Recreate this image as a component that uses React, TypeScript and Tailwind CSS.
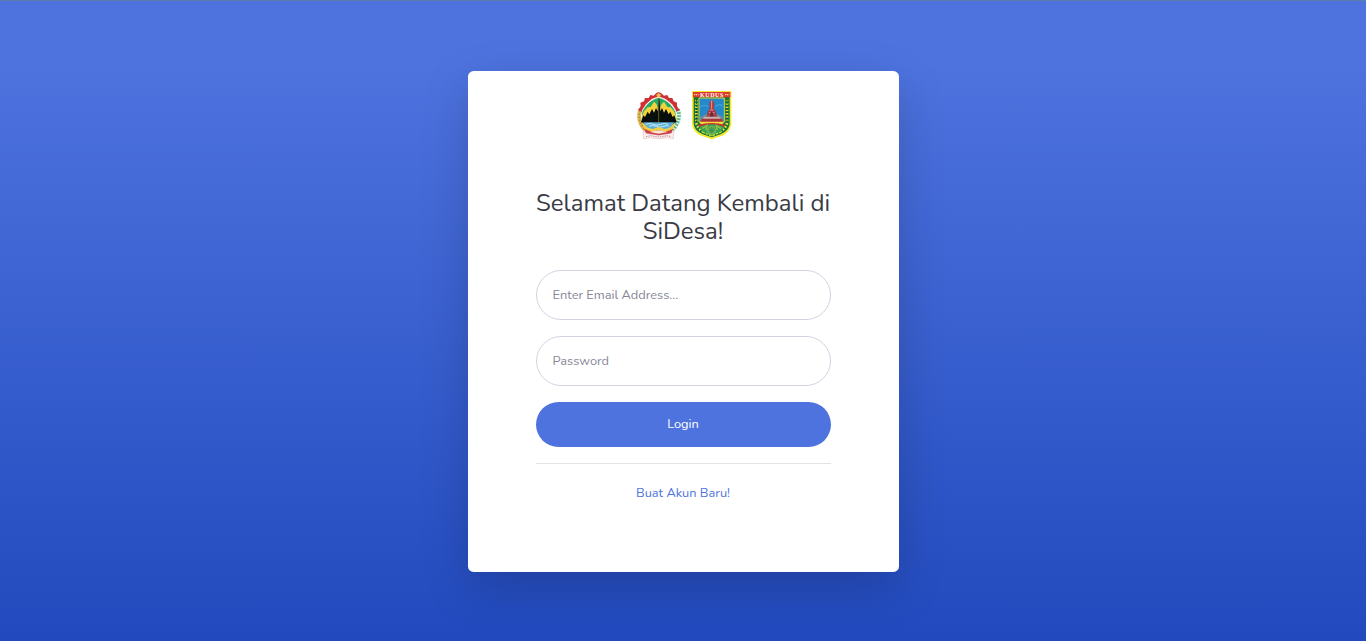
import React from "react";

function ProvinceCrest() {
  return (
    <svg width="54" height="58" viewBox="0 0 162 174" role="img" aria-label="Jawa Tengah">
      <path d="M33 136 L46 142 Q80 153 114 142 L126 136 L124 158 L106 155 Q81 162 54 155 L35 159Z" fill="#f9eeee" stroke="#e2c6c6" strokeWidth="2" />
      <path d="M42 152 L56 149 Q81 156 104 149 L118 152" fill="none" stroke="#c08a8a" strokeWidth="3" strokeDasharray="4 3" />
      <path d="M25 72 C17 93 23 116 40 132" fill="none" stroke="#dfb850" strokeWidth="12" />
      <path d="M24 74 C17 94 25 117 39 131" fill="none" stroke="#a98138" strokeWidth="4" strokeDasharray="4 5" />
      <path d="M137 70 C145 92 139 114 122 131" fill="none" stroke="#dff3e8" strokeWidth="14" />
      <path d="M138 70 C145 92 139 114 122 131" fill="none" stroke="#58b482" strokeWidth="11" strokeDasharray="5 4" />
      <path d="M18 72 L26 61 L25 50 L36 46 L39 36 L50 36 L55 27 L65 29 L73 21 L80 18 L88 22 L96 29 L106 27 L111 36 L121 36 L125 46 L135 50 L135 61 L143 72 L132 77 L119 58 L100 42 L80 34 L60 42 L43 57 L30 77Z" fill="#cf3038" />
      <path d="M31 75 L43 56 L60 41 L80 33 L100 41 L119 56 L131 75" fill="none" stroke="#fff0ea" strokeWidth="4" />
      <path d="M80 36 C60 39 40 57 31 78 L29 98 L42 124 L80 134 L119 124 L133 98 L130 78 C121 57 100 39 80 36Z" fill="#25ad68" />
      <path d="M29 92 L36 76 L47 64 L56 63 L66 47 L73 54 L78 66 L84 66 L89 54 L96 47 L106 63 L116 64 L126 76 L133 92 V102 H29Z" fill="#f3d23c" />
      <path d="M27 108 L34 88 L39 93 L47 77 L52 85 L60 69 L66 80 L72 66 L77 76 L79 38 H82 L85 76 L90 66 L96 80 L102 69 L110 85 L115 77 L122 93 L127 88 L134 108 L123 115 H38Z" fill="#090f0c" />
      <path d="M80 37 V110" stroke="#8f8330" strokeWidth="2" />
      <path d="M34 109 H127 Q119 125 103 132 H57 Q41 125 34 109Z" fill="#5cadd8" />
      <path d="M42 115 Q53 110 64 115 T86 115 T108 115 M51 121 Q62 116 73 121 T96 121 T111 121" fill="none" stroke="#c9eaf5" strokeWidth="3" />
      <path d="M31 108 L39 117 Q46 128 62 129 L80 123 L98 129 Q114 128 121 117 L130 108 L124 129 Q106 142 80 138 Q54 142 37 129Z" fill="#f1ce43" />
      <path d="M36 128 L61 138 L80 132 L99 138 L124 128 L118 142 L80 148 L42 142Z" fill="#ce414a" />
      <path d="M54 138 L80 133 L106 138 L80 143Z" fill="#fae8d6" />
      <path d="M80 19 L83 25 L89 26 L84 30 L86 36 L80 33 L74 36 L76 30 L71 26 L77 25Z" fill="#e8c552" />
    </svg>
  );
}

function RegencyCrest() {
  return (
    <svg width="52" height="58" viewBox="0 0 156 174" role="img" aria-label="Kudus">
      <path d="M18 15 H136 V114 Q134 138 109 149 Q91 154 77 160 Q62 154 46 149 Q20 139 18 114Z" fill="#f4e92e" />
      <path d="M23 33 H131 V113 Q129 134 104 145 L77 154 L50 145 Q25 134 23 113Z" fill="#16753c" />
      <path d="M21 18 H133 V34 H21Z" fill="#dd3930" />
      <text x="77" y="32" textAnchor="middle" fill="#fff" fontFamily="Liberation Serif, serif" fontSize="18" fontWeight="700" textLength="70">KUDUS</text>
      <path d="M24 26 H38 M117 26 H130" stroke="#ffd4a3" strokeWidth="4" strokeDasharray="4 2" />
      <path d="M31 41 V111 Q34 127 52 137 M123 41 V111 Q120 127 102 137" fill="none" stroke="#eadc36" strokeWidth="8" strokeDasharray="5 5" />
      <path d="M31 40 V112 M123 40 V112" stroke="#173e26" strokeWidth="3" strokeDasharray="5 4" />
      <path d="M39 36 H115 V108 H39Z" fill="#2488c9" stroke="#d5dd37" strokeWidth="3" />
      <path d="M42 62 Q57 55 67 62 M88 61 Q99 53 112 60" fill="none" stroke="#3d9bd2" strokeWidth="5" />
      <path d="M41 94 L61 84 L77 89 L94 84 L113 94 V110 H41Z" fill="#668f9b" />
      <path d="M77 38 L85 53 L84 68 L90 77 L94 95 H61 L65 77 L71 68 L70 53Z" fill="#ad3a43" />
      <path d="M77 43 V68 M72 72 H82 M69 80 H85" stroke="#ef9c91" strokeWidth="3" />
      <path d="M73 80 Q77 73 81 80 V95 H73Z" fill="#632d3a" />
      <path d="M55 92 H100 L106 101 H48Z" fill="#c7b3ae" />
      <path d="M47 98 H108 L112 109 H42Z" fill="#ab3639" />
      <path d="M39 107 H115 L107 118 Q77 109 47 118Z" fill="#f1dd36" />
      <path d="M35 117 Q77 105 119 117 L110 126 Q77 113 44 126Z" fill="#cf3031" />
      <path d="M40 122 Q77 108 114 122 L107 136 L77 151 L47 136Z" fill="#38a34e" />
      <path d="M49 127 L63 119 L60 132 M105 127 L91 119 L94 132" fill="none" stroke="#9dbe45" strokeWidth="4" />
      <circle cx="77" cy="133" r="12" fill="#55a853" stroke="#83bd59" strokeWidth="3" />
      <path d="M69 133 H85 M77 124 V142 M71 128 L83 139 M83 128 L71 139" stroke="#378b4d" strokeWidth="2" />
      <path d="M49 138 L77 150 L105 138" fill="none" stroke="#c9d734" strokeWidth="4" strokeDasharray="8 3" />
    </svg>
  );
}

export default function App() {
  return (
    <main className="h-[641px] w-full border-t border-[#5b7dae] bg-[linear-gradient(180deg,#4e73df_10%,#224abe_100%)] pt-[70px] font-[Nunito,Lato,sans-serif]">
      <section className="mx-auto flex h-[501px] w-[431px] flex-col rounded-[5.6px] bg-white px-[68px] pt-[15px] shadow-[0_16px_48px_rgba(0,0,0,0.175)]">
        <div className="flex h-[58px] justify-center pl-[3px]">
          <ProvinceCrest />
          <RegencyCrest />
        </div>
        <h1 className="mt-[45px] mb-[25px] text-center text-[24px] leading-[28px] font-normal text-[#3a3b45]">
          Selamat Datang Kembali di SiDesa!
        </h1>
        <form onSubmit={(event) => event.preventDefault()}>
          <input
            type="email"
            aria-label="Email"
            placeholder="Enter Email Address..."
            className="mb-4 block h-[50px] w-full rounded-full border border-[#d1d3e2] px-4 text-[12.8px] text-[#6e707e] outline-none placeholder:text-[#858796]"
          />
          <input
            type="password"
            aria-label="Password"
            placeholder="Password"
            className="mb-4 block h-[50px] w-full rounded-full border border-[#d1d3e2] px-4 text-[12.8px] text-[#6e707e] outline-none placeholder:text-[#858796]"
          />
          <button className="block h-[45px] w-full rounded-full bg-[#4e73df] text-[12.8px] text-white">
            Login
          </button>
        </form>
        <hr className="my-4 border-[#e3e3e6]" />
        <a href="#" className="mt-[3px] text-center text-[12.8px] leading-5 text-[#4e73df]">
          Buat Akun Baru!
        </a>
      </section>
    </main>
  );
}
